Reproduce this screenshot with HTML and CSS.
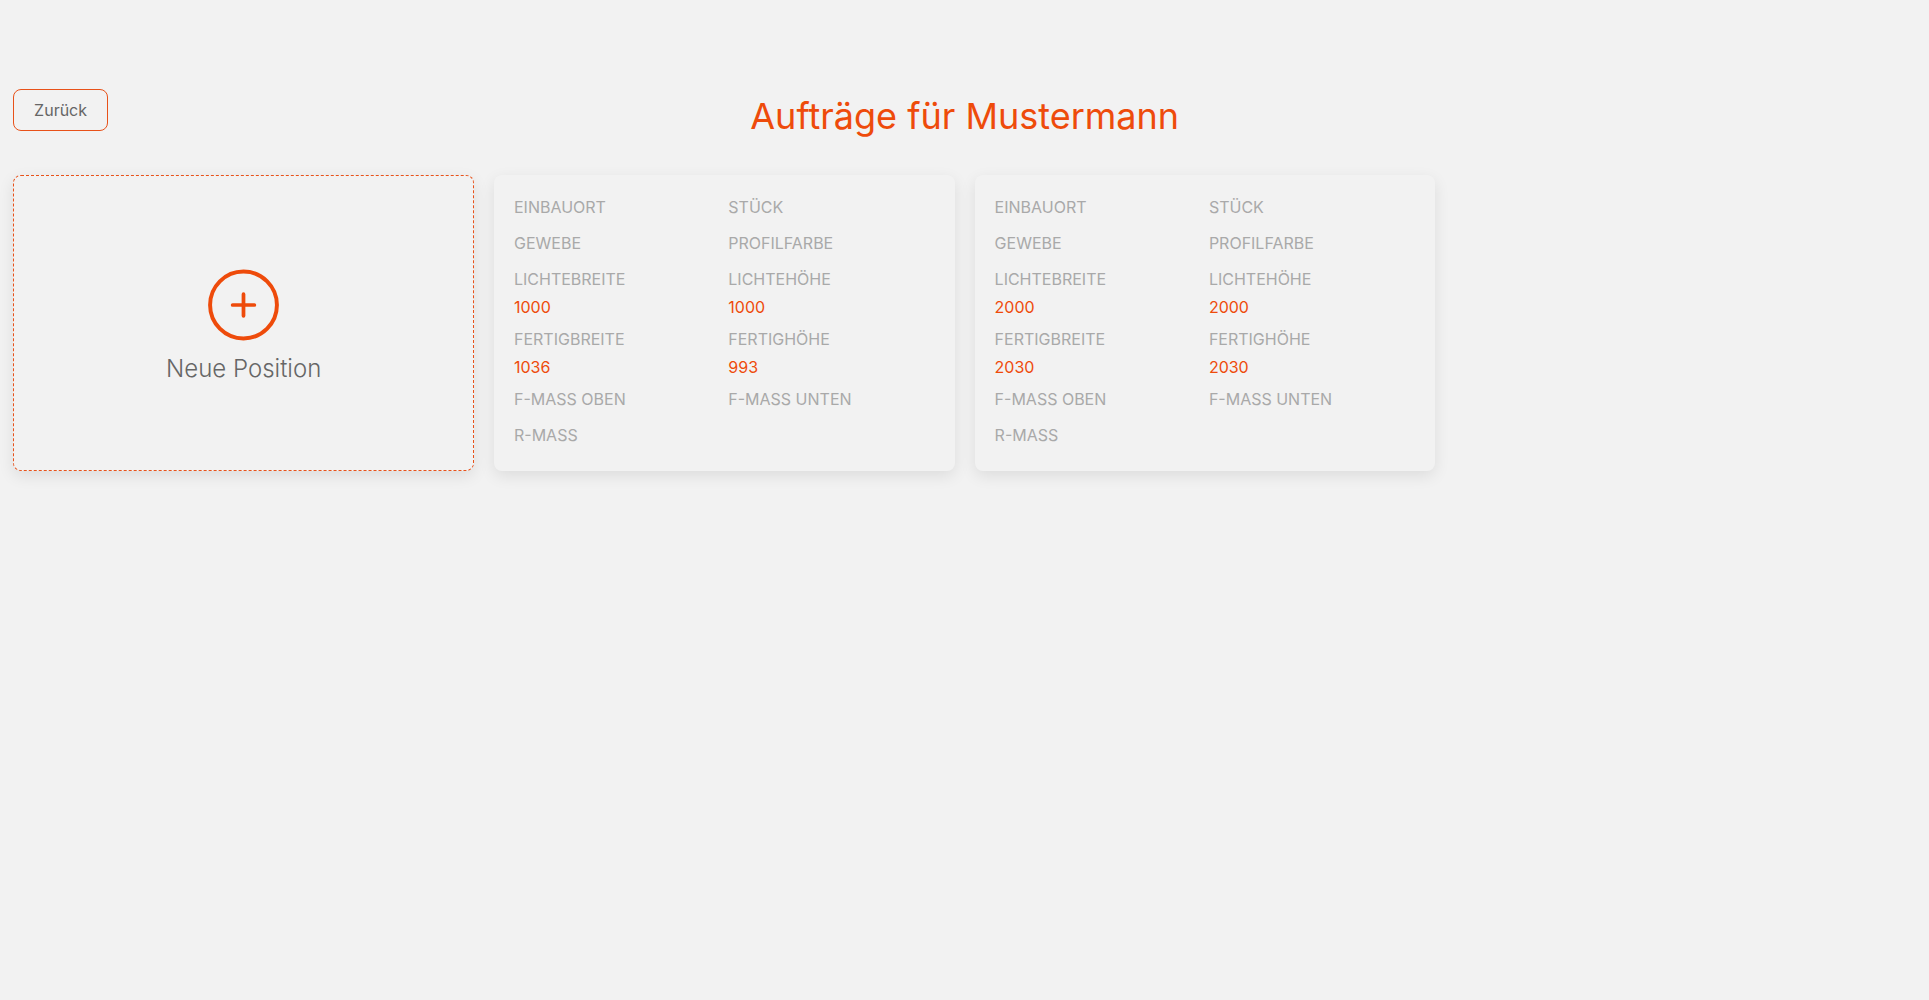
FILE: index.html
```html
<!DOCTYPE html>
<html lang="de">
<head>
<meta charset="utf-8">
<title>Aufträge für Mustermann</title>
<link rel="stylesheet" href="styles.css">
</head>
<body>
<div class="page">
  <header class="head">
    <div class="head-side"><button class="back" type="button">Zurück</button></div>
    <h1 class="title">Aufträge für Mustermann</h1>
    <div class="head-side"></div>
  </header>
  <main class="cards">
    <a class="card card-new">
      <svg class="plus-icon" viewBox="0 0 72 72" aria-hidden="true">
        <circle cx="36" cy="36" r="33.9" fill="none" stroke="#ee4b0b" stroke-width="4"/>
        <path d="M36 25V47M25 36H47" fill="none" stroke="#ee4b0b" stroke-width="3.8" stroke-linecap="round"/>
      </svg>
      <span class="new-label">Neue Position</span>
    </a>
    <article class="card card-data">
      <div class="field"><div class="label">Einbauort</div><div class="value"></div></div>
      <div class="field"><div class="label">Stück</div><div class="value"></div></div>
      <div class="field"><div class="label">Gewebe</div><div class="value"></div></div>
      <div class="field"><div class="label">Profilfarbe</div><div class="value"></div></div>
      <div class="field"><div class="label">Lichtebreite</div><div class="value">1000</div></div>
      <div class="field"><div class="label">Lichtehöhe</div><div class="value">1000</div></div>
      <div class="field"><div class="label">Fertigbreite</div><div class="value">1036</div></div>
      <div class="field"><div class="label">Fertighöhe</div><div class="value">993</div></div>
      <div class="field"><div class="label">F-Mass oben</div><div class="value"></div></div>
      <div class="field"><div class="label">F-Mass unten</div><div class="value"></div></div>
      <div class="field"><div class="label">R-Mass</div><div class="value"></div></div>
    </article>
    <article class="card card-data">
      <div class="field"><div class="label">Einbauort</div><div class="value"></div></div>
      <div class="field"><div class="label">Stück</div><div class="value"></div></div>
      <div class="field"><div class="label">Gewebe</div><div class="value"></div></div>
      <div class="field"><div class="label">Profilfarbe</div><div class="value"></div></div>
      <div class="field"><div class="label">Lichtebreite</div><div class="value">2000</div></div>
      <div class="field"><div class="label">Lichtehöhe</div><div class="value">2000</div></div>
      <div class="field"><div class="label">Fertigbreite</div><div class="value">2030</div></div>
      <div class="field"><div class="label">Fertighöhe</div><div class="value">2030</div></div>
      <div class="field"><div class="label">F-Mass oben</div><div class="value"></div></div>
      <div class="field"><div class="label">F-Mass unten</div><div class="value"></div></div>
      <div class="field"><div class="label">R-Mass</div><div class="value"></div></div>
    </article>
  </main>
</div>
</body>
</html>
```
FILE: styles.css
```css
* { box-sizing: border-box; }
html, body { margin: 0; height: 100%; }
body {
  background: #f2f2f2;
  font-family: Inter, "Liberation Sans", sans-serif;
  font-size: 16px;
  line-height: 24px;
  color: #666;
}
.page { padding: 89px 13px 0 13.4px; min-height: 1000px; }
.head {
  display: grid;
  grid-template-columns: 1fr auto 1fr;
  height: 86.4px;
}
.back {
  width: 94.4px;
  height: 42px;
  background: transparent;
  border: 1px solid #e8521a;
  border-radius: 8px;
  font: inherit;
  color: #666;
  padding: 0;
}
.title {
  margin: 5px 0 0;
  font-size: 36px;
  line-height: 44px;
  font-weight: 400;
  color: #ee4b0b;
}
.cards {
  display: flex;
  gap: 20px;
}
.card {
  width: 460.6px;
  height: 296px;
  border-radius: 8px;
  background: #f2f2f2;
  box-shadow: 0 5px 16px rgba(0, 0, 0, 0.09);
}
.card-new {
  display: flex;
  flex-direction: column;
  align-items: center;
  border: 1px dashed #e8521a;
  padding-top: 93px;
}
.plus-icon {
  display: block;
  width: 71px;
  height: 72px;
}
.new-label {
  margin-top: 10px;
  font-size: 24px;
  line-height: 36px;
  font-weight: 300;
  color: #666;
}
.card-data {
  display: grid;
  grid-template-columns: 1fr 1fr;
  align-content: start;
  padding: 20px 12px 12px 20px;
}
.field { padding-bottom: 8px; }
.label {
  margin-bottom: 4px;
  text-transform: uppercase;
  color: #a9a9a9;
}
.value { color: #ee4b0b; }
```
